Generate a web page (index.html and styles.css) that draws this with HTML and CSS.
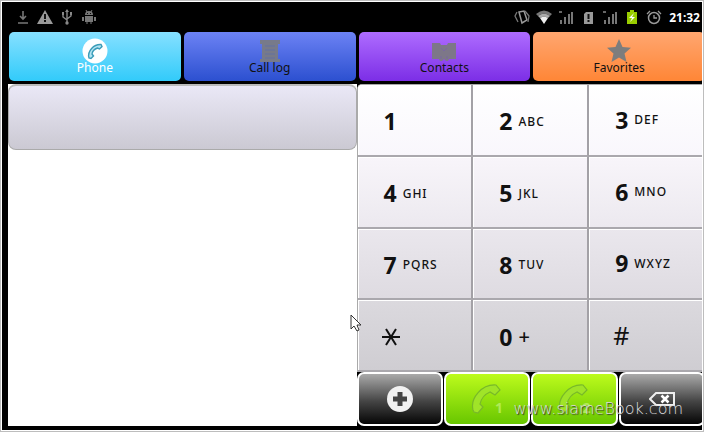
FILE: index.html
```html
<!DOCTYPE html>
<html lang="en">
<head>
  <meta charset="UTF-8">
  <title>Phone</title>
  <link rel="stylesheet" href="styles.css">
</head>
<body>

<div class="phone">
  <header class="status">
    <div class="status-group">
      <svg viewBox="0 0 16 16"><path d="M8 2v7M5 7l3 3 3-3M3 14h10" fill="none" stroke="#777" stroke-width="1.600"/></svg>
      <svg viewBox="0 0 16 16"><path d="M8 1l8 14H0z" fill="#999"/><path d="M8 5v5M8 11v2" stroke="#111" stroke-width="2"/></svg>
      <svg viewBox="0 0 16 16"><path d="M8 2v12M4 5v3l4 3M12 4v3l-4 3" fill="none" stroke="#888" stroke-width="1.4"/><path d="M8 0l2 3H6z" fill="#888"/><circle cx="8" cy="14" r="1.7" fill="#888"/><path d="M3 3h2v3H3zM11 3h2v3h-2z" fill="#888"/></svg>
      <svg viewBox="0 0 16 16"><path d="M4 6a4 4 0 0 1 8 0zM4 7h8v6H4zM1 8h2v4H1zM13 8h2v4h-2z" fill="#777"/><path d="M5 1l1 2M11 1l-1 2M6 12v3M10 12v3" stroke="#777"/><circle cx="6.500" cy="4.500" r=".6"/><circle cx="9.500" cy="4.500" r=".6"/></svg>
    </div>
    <div class="status-group">
      <svg viewBox="0 0 16 16"><path d="M5 3l5-1 3 9-5 3z" fill="none" stroke="#999" stroke-width="1.5"/><path d="M3 3L1 7l3 6M11 2l4 5-1 6" fill="none" stroke="#777" stroke-width="1.3"/></svg>
      <svg viewBox="0 0 16 16"><path d="M0 5q8-7 16 0l-2 2Q8 2 2 7z" fill="#777"/><path d="M2 7q6-5 12 0l-2 2q-4-3-8 0z" fill="#aaa"/><path d="M4 9q4-3 8 0l-4 6z" fill="#eee"/></svg>
      <svg viewBox="0 0 16 16"><path d="M3 11v4M7 8v7M11 5v10M14 3v12" stroke="#777" stroke-width="2"/><path d="M1 3h3" stroke="#666" stroke-width="2"/></svg>
      <svg viewBox="0 0 16 16"><path d="M6 3h7v12H4V5z" fill="#999"/><path d="M8.500 5v5M8.500 11v2" stroke="#111" stroke-width="2"/></svg>
      <svg viewBox="0 0 16 16"><path d="M3 11v4M7 8v7M11 5v10M14 3v12" stroke="#777" stroke-width="2"/><path d="M1 3h3" stroke="#666" stroke-width="2"/></svg>
      <svg viewBox="0 0 16 16"><path d="M3 3h3V1h4v2h3v12H3z" fill="#9c0"/><path d="M10 4l-5 5h3l-2 4 5-5H8z" fill="#fff"/></svg>
      <svg viewBox="0 0 16 16"><circle cx="8" cy="9" r="5.500" fill="none" stroke="#999" stroke-width="1.5"/><path d="M8 6v3h3M1 5l3-3M15 5l-3-3" fill="none" stroke="#999" stroke-width="1.3"/></svg>
      <time>21:32</time>
    </div>
  </header>

  <nav class="tabs">
    <button class="tab tab-phone">
      <svg viewBox="0 0 26 26"><circle cx="13" cy="13" r="12.500" fill="#fff"/><path d="M7 20c-2-7 5-14 12-13.500l1 2-2.500 2.500-2-1c-3 1-5 3-5.500 6l1.500 2-2.500 2.500z" fill="#b5e4f2" stroke="#3a9cb8" stroke-width="1.400"/></svg>
      <span>Phone</span>
    </button>
    <button class="tab tab-log">
      <svg viewBox="0 0 26 26"><path d="M3 2h20v4h-2v15h2v3H3v-3h2V6H3z" fill="#777a8a"/><path d="M8 8h10M8 12h10M8 16h10M8 20h10" stroke="#6570a0"/></svg>
      <span>Call log</span>
    </button>
    <button class="tab tab-contacts">
      <svg viewBox="0 0 26 26"><path d="M1 5h8l1 2h6l1-2h8v16h-7l-1 2h-2l-2-2-2 2H9l-1-2H1z" fill="#7d7788"/><path d="M10 10l3 3 3-3M10 18v3M16 18v3" fill="none" stroke="#7868a0"/></svg>
      <span>Contacts</span>
    </button>
    <button class="tab tab-favorites">
      <svg viewBox="0 0 26 26"><path d="M13 1l3.500 8 8.500.8-6.500 5.700 2 8.500-7.500-4.500L5.500 24l2-8.500L1 9.800 9.500 9z" fill="#7d7d7d"/></svg>
      <span>Favorites</span>
    </button>
  </nav>

  <main class="dialer">
    <section class="results">
      <input class="number" type="tel" aria-label="Phone number">
    </section>

    <section class="pad">
      <div class="keys">
        <button class="key"><b>1</b></button>
        <button class="key"><b>2</b><span>ABC</span></button>
        <button class="key"><b>3</b><span>DEF</span></button>
        <button class="key"><b>4</b><span>GHI</span></button>
        <button class="key"><b>5</b><span>JKL</span></button>
        <button class="key"><b>6</b><span>MNO</span></button>
        <button class="key"><b>7</b><span>PQRS</span></button>
        <button class="key"><b>8</b><span>TUV</span></button>
        <button class="key"><b>9</b><span>WXYZ</span></button>
        <button class="key symbol" aria-label="Star"><svg viewBox="0 0 18 18"><path d="M0 9h18M4 1l10 16M14 1L4 17" stroke="#111" stroke-width="2"/></svg></button>
        <button class="key"><b>0</b><span class="plus">+</span></button>
        <button class="key symbol">#</button>
      </div>

      <div class="actions">
        <button class="action dark" aria-label="Add contact">
          <svg viewBox="0 0 26 26"><circle cx="13" cy="13" r="13" fill="#f1f1f1"/><path d="M13 6v14M6 13h14" stroke="#444" stroke-width="5"/></svg>
        </button>
        <button class="action green" aria-label="Call with line 1">
          <svg class="handset" viewBox="0 0 30 30"><path d="M2 26C-1 14 11 0 25 1l4 5-5 5-5-3C14 10 10 15 9 20l3 3-5 6-4-1z" fill="#a0e428" stroke="#78b82a" stroke-width="1.200"/></svg>
          <span>1</span>
        </button>
        <button class="action green" aria-label="Call with line 2">
          <svg class="handset" viewBox="0 0 30 30"><path d="M2 26C-1 14 11 0 25 1l4 5-5 5-5-3C14 10 10 15 9 20l3 3-5 6-4-1z" fill="#a0e428" stroke="#78b82a" stroke-width="1.200"/></svg>
          <span>2</span>
        </button>
        <button class="action dark" aria-label="Delete">
          <svg viewBox="0 0 26 26"><path d="M7 7h18v12H7l-6-6z" fill="none" stroke="#eee" stroke-width="2"/><path d="M12.500 9.500l7 7M19.500 9.500l-7 7" stroke="#fff" stroke-width="2.500"/></svg>
        </button>
      </div>
    </section>
  </main>

  <svg class="cursor" viewBox="0 0 12 18"><path d="M1 1v14l3-3 3 5 2-1-2-5h4z" fill="#fff" stroke="#333"/></svg>
  <div class="watermark">www.siameBook.com</div>
</div>

</body>
</html>
```
FILE: styles.css
```css
* {
  box-sizing: border-box;
}

body {
  margin: 0;
  padding: 1px;
  min-height: 100vh;
  display: flex;
  border: 1px solid #bdbdbd;
  background: #fff;
  font-family: 'Noto Sans', 'Open Sans', sans-serif;
}

button {
  margin: 0;
  padding: 0;
  border: none;
  font-family: inherit;
  color: #111;
  cursor: pointer;
}

.phone {
  flex: 1;
  min-width: 0;
  position: relative;
  display: flex;
  flex-direction: column;
  background: #000;
  overflow: hidden;
}

.status {
  height: 30px;
  padding: 0 2px 0 13px;
  display: flex;
  align-items: center;
  justify-content: space-between;
}

.status-group {
  display: flex;
  align-items: center;
  gap: 6px;
}

.status svg {
  width: 16px;
  height: 16px;
}

.status time {
  padding-left: 1px;
  color: #fff;
  font-size: 12px;
  font-weight: bold;
}

/* the screen runs a little past the right edge */
.tabs,
.dialer {
  margin-right: -3px;
}

.tabs {
  display: grid;
  grid-template-columns: repeat(4, 1fr);
  gap: 3px;
  padding-left: 7px;
}

.tab {
  height: 49px;
  padding-top: 6px;
  display: flex;
  flex-direction: column;
  align-items: center;
  border-radius: 5px;
  font-size: 12px;
  line-height: 12px;
}

.tab svg {
  width: 26px;
  height: 26px;
  margin-bottom: -2px;
}

.tab span {
  position: relative;
}

.tab-phone {
  background: linear-gradient(#86e0ff, #32cbfa);
  color: #fff;
}

.tab-log {
  background: linear-gradient(#6c82f4, #2c50d0);
}

.tab-contacts {
  background: linear-gradient(#ae6cff, #7c2ee6);
}

.tab-favorites {
  background: linear-gradient(#ffa670, #ff8636);
}

.dialer {
  flex: 1;
  display: grid;
  grid-template-columns: 1fr 1fr;
  padding: 3px 0 4px 6px;
}

.results {
  background: #fff;
}

.number {
  width: 100%;
  height: 66px;
  padding: 0 12px;
  display: block;
  border: 1px solid #aaa;
  border-top: 2px solid #bbb;
  border-radius: 8px;
  background: linear-gradient(#eae8f6, #cbc9d3);
  font-size: 24px;
}

.pad {
  display: flex;
  flex-direction: column;
}

.keys {
  flex: 1;
  display: grid;
  grid-template-columns: repeat(3, 1fr);
  grid-auto-rows: 1fr;
  border-left: 1px solid #aaa;
  border-top: 1px solid #aaa;
  border-radius: 5px 0 0 0;
  background: #fff;
  overflow: hidden;
}

.key {
  padding: 3px 0 0 26px;
  display: flex;
  align-items: center;
  gap: 6px;
  border-right: 2px solid #a3a1a6;
  border-bottom: 2px solid #aaa8ad;
  box-shadow: inset 1px 1px #fff;
  background: linear-gradient(#fff, #f9f7fc);
  font-size: 12px;
  font-weight: 500;
}

.key:nth-child(n+4) {
  background: linear-gradient(#f8f5fa, #ece9ef);
}

.key:nth-child(n+7) {
  background: linear-gradient(#eae7ed, #dedbe1);
}

.key:nth-child(n+10) {
  background: linear-gradient(#dbd9de, #cfcdd2);
}

.key:nth-child(3n) {
  padding-bottom: 3px;
}

.key b {
  font-size: 23px;
}

.key span {
  letter-spacing: 1px;
}

.key svg {
  width: 18px;
  height: 18px;
}

.key .plus {
  font-size: 20px;
}

.key.symbol {
  padding-left: 24px;
  font-size: 25px;
  font-weight: 400;
}

.actions {
  height: 54px;
  display: grid;
  grid-template-columns: repeat(4, 1fr);
  gap: 1px;
}

.action {
  display: flex;
  align-items: center;
  justify-content: center;
  border: 2px solid #fff;
  border-radius: 7px;
}

.action svg {
  width: 26px;
  height: 26px;
}

.action .handset {
  width: 30px;
  height: 30px;
}

.action span {
  align-self: flex-end;
  margin-left: -6px;
  padding-bottom: 8px;
  color: #b0ea58;
  font-size: 14px;
  font-weight: bold;
  line-height: 16px;
}

.dark {
  background: linear-gradient(#aaa, #444 55%, #050505);
}

.green {
  background: linear-gradient(#bdfb1c, #68c600);
}

.cursor {
  position: absolute;
  left: 348px;
  top: 312px;
  width: 12px;
  height: 18px;
}

.watermark {
  position: absolute;
  right: 19px;
  bottom: 11px;
  color: #ddd;
  font-family: 'DejaVu Sans', sans-serif;
  font-size: 16px;
  font-weight: 200;
  line-height: 20px;
  text-shadow: 1px 1px 1px #333;
  pointer-events: none;
}
```
